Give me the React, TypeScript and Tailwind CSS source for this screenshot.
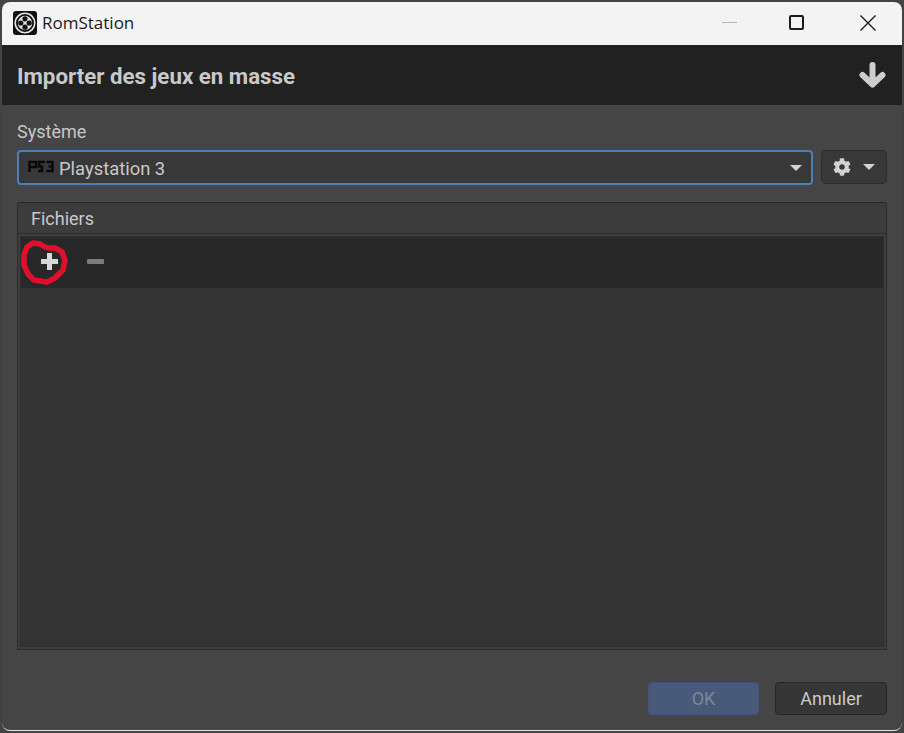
import React from 'react'
import { FaCog } from 'react-icons/fa'

function AppLogo() {
    return (
        <svg width="24" height="24" viewBox="0 0 24 24" className="shrink-0">
            <rect width="24" height="24" rx="3" fill="#111" />
            <circle cx="12" cy="12" r="9.8" fill="none" stroke="#e4e4e4" strokeWidth="1.6" />
            <circle cx="12" cy="12" r="7.2" fill="#e4e4e4" />
            <circle cx="12" cy="7.8" r="2.6" fill="#111" />
            <circle cx="12" cy="16.2" r="2.6" fill="#111" />
            <circle cx="7.8" cy="12" r="2.6" fill="#111" />
            <circle cx="16.2" cy="12" r="2.6" fill="#111" />
        </svg>
    )
}

function Ps3Logo() {
    return (
        <svg width="26" height="13" viewBox="0 0 26 13" className="shrink-0" fill="none" stroke="#0a0a0a" strokeWidth="2.6">
            <path d="M1.5 12V2H8V7H2" />
            <path d="M10 11H14V6.5H11V2H17" />
            <path d="M18.5 2H24.5V11H18.5M20.5 6.5H24.5" />
        </svg>
    )
}

function Caret() {
    return <div className="h-0 w-0 border-x-[6px] border-t-[6px] border-x-transparent border-t-[#d2d2d2]" />
}

export default function App() {
    return (
        <div className="relative h-[733px] w-[904px] overflow-hidden bg-[#434343] p-[2px] font-['Roboto',sans-serif]">
            <div className="flex h-[729px] flex-col overflow-hidden rounded-[8px] border-b border-b-[#e6e6e6] bg-[#454545]">
                <div className="flex h-[43px] shrink-0 items-center bg-[#f3f3f3] pb-[2px] pl-[11px]">
                    <AppLogo />
                    <span className="ml-[5px] font-['Open_Sans',sans-serif] text-[17px] text-[#1a1a1a]">RomStation</span>
                    <div className="ml-auto flex items-center">
                        <div className="mr-[52px] h-px w-[15px] bg-[#b5b5b5]" />
                        <div className="mr-[56px] h-[15px] w-[15px] rounded-[2px] border-2 border-[#1c1c1c]" />
                        <svg width="16" height="16" viewBox="0 0 16 16" className="mr-[26px]" stroke="#1c1c1c" strokeWidth="1.4">
                            <path d="M0.5 0.5L15.5 15.5M15.5 0.5L0.5 15.5" />
                        </svg>
                    </div>
                </div>

                <div className="flex h-[60px] shrink-0 items-center justify-between bg-[#212121] pl-[15px] pr-[16px]">
                    <h1 className="mt-[3px] text-[22.3px] font-bold text-[#c9c9c9]">Importer des jeux en masse</h1>
                    <svg width="27" height="26" viewBox="0 0 27 26" className="mb-[1px]" fill="none" stroke="#cdcdcd" strokeWidth="6" strokeLinecap="round" strokeLinejoin="round">
                        <path d="M13.5 3V22M3.5 13L13.5 22.5L23.5 13" />
                    </svg>
                </div>

                <div className="flex flex-1 flex-col px-[15px]">
                    <label className="mt-[16px] text-[18px] leading-[22px] text-[#c8c8c8]">Système</label>
                    <div className="mt-[7px] flex gap-[8px]">
                        <div className="flex h-[35px] flex-1 items-center rounded-[4px] border-2 border-[#4a7fb8] bg-[#383838] pl-[9px] pr-[9px]">
                            <div className="mb-[3px]"><Ps3Logo /></div>
                            <span className="ml-[5px] mt-[3px] text-[18.4px] text-[#c8c8c8]">Playstation 3</span>
                            <div className="ml-auto"><Caret /></div>
                        </div>
                        <div className="flex h-[34px] w-[66px] items-center justify-center gap-[12px] rounded-[5px] border border-[#2c2c2c] bg-[#383838]">
                            <FaCog className="text-[18px] text-[#d2d2d2]" />
                            <Caret />
                        </div>
                    </div>

                    <div className="mt-[17px] flex h-[448px] flex-col rounded-t-[3px] border border-[#2b2b2b] bg-[#3c3c3c]">
                        <div className="flex h-[31px] shrink-0 items-center border-b border-b-[#2e2e2e] pl-[13px] text-[18px] text-[#c8c8c8]">
                            Fichiers
                        </div>
                        <div className="m-[2px] flex flex-1 flex-col border border-[#2f2f2f] bg-[#333333]">
                            <div className="flex h-[51px] shrink-0 items-center bg-[#282828] pl-[20px]">
                                <svg width="17" height="17" viewBox="0 0 17 17" stroke="#d8d8d8" strokeWidth="5" fill="none" className="mb-[2px]">
                                    <path d="M8.5 0V17M0 8.5H17" />
                                </svg>
                                <div className="mb-[2px] ml-[29px] h-[5px] w-[17px] rounded-[1px] bg-[#7c7c7c]" />
                            </div>
                        </div>
                    </div>

                    <div className="mt-[32px] flex justify-end gap-[16px]">
                        <button className="h-[33px] w-[111px] rounded-[4px] border border-[#425475] bg-[#475a7a] text-[18px] text-[#7d8797]">OK</button>
                        <button className="h-[33px] w-[112px] rounded-[4px] border border-[#262626] bg-[#363636] text-[18px] text-[#cccccc]">Annuler</button>
                    </div>
                </div>
            </div>

            {/* red scribble drawn over the add button */}
            <svg className="absolute left-0 top-0 pointer-events-none" width="904" height="733" fill="none">
                <path
                    d="M45 247L40 244L33 243L27 247L24 255L24 265L28 274L34 280L47 282L55 278L63 270L65 260L62 252L55 248L48 248L45 247"
                    stroke="#e0102c"
                    strokeWidth="5.5"
                    strokeLinecap="round"
                    strokeLinejoin="round"
                />
            </svg>
        </div>
    )
}
